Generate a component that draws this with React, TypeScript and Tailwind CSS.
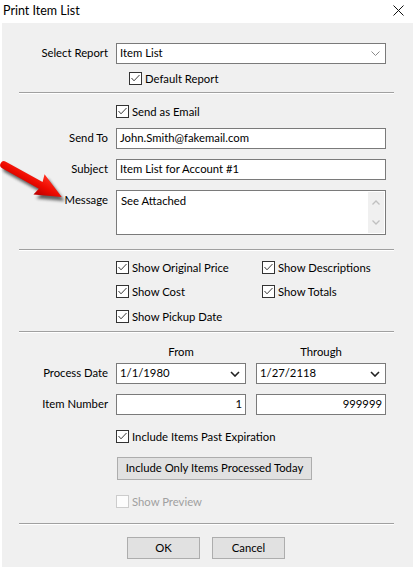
import React from "react";

const FONT = { fontFamily: "Lato, 'Noto Sans', sans-serif" };

function CheckMark() {
  return (
    <svg width="11" height="11" viewBox="0 0 11 11">
      <polyline points="1.5,5 4,7.8 9.5,2" fill="none" stroke="#3a3a3a" strokeWidth="1" />
    </svg>
  );
}

function Check({ label, checked = true, disabled = false }: { label: string; checked?: boolean; disabled?: boolean }) {
  return (
    <div className="flex items-center h-[13px] gap-[3px]">
      <div
        className={
          disabled
            ? "w-[13px] h-[13px] border border-[#cccccc] bg-[#fcfcfc] shrink-0"
            : "w-[13px] h-[13px] border border-[#333333] bg-white shrink-0 flex items-center justify-center"
        }
      >
        {checked && <CheckMark />}
      </div>
      <span className={disabled ? "text-[#a0a0a0] leading-[15px] whitespace-nowrap" : "text-black leading-[15px] whitespace-nowrap"}>{label}</span>
    </div>
  );
}

function Sep({ mt }: { mt: string }) {
  return (
    <div className={`${mt} ml-[17px] w-[375px] flex flex-col`}>
      <div className="h-[1px] bg-[#a0a0a0]" />
      <div className="h-[1px] bg-white" />
    </div>
  );
}

function Label({ children }: { children: React.ReactNode }) {
  return <div className="w-[106px] text-right pr-0 whitespace-nowrap">{children}</div>;
}

function DarkChevron() {
  return (
    <svg width="10" height="6" viewBox="0 0 10 6">
      <polyline points="1,1 5,5 9,1" fill="none" stroke="#222222" strokeWidth="1.6" />
    </svg>
  );
}

const ARROW_PATH = "M 0,-3.8 L 42,-3.8 L 40,-11.5 L 66,0 L 40,11.5 L 42,3.8 L 0,3.8 A 3.8 3.8 0 0 1 0,-3.8 Z";

function Arrow() {
  return (
    <svg className="absolute left-0 top-[150px] pointer-events-none" width="80" height="70" viewBox="0 0 80 70">
      <defs>
        <filter id="blur" x="-30%" y="-30%" width="160%" height="160%">
          <feGaussianBlur stdDeviation="1.8" />
        </filter>
        <linearGradient id="red" gradientUnits="userSpaceOnUse" x1="0" y1="-11" x2="0" y2="11">
          <stop offset="0" stopColor="#ff3020" />
          <stop offset="0.5" stopColor="#ee0a00" />
          <stop offset="1" stopColor="#b80000" />
        </linearGradient>
      </defs>
      <g transform="translate(7,19) rotate(29)" filter="url(#blur)" opacity="0.6">
        <path d={ARROW_PATH} fill="#000" />
      </g>
      <g transform="translate(4,15) rotate(29)">
        <path d={ARROW_PATH} fill="url(#red)" />
      </g>
    </svg>
  );
}

export default function App() {
  return (
    <div className="relative w-[415px] h-[570px] bg-white text-[11.3px] text-black overflow-hidden" style={FONT}>
      {/* Title bar */}
      <div className="h-[23px] flex items-center justify-between pl-[3px] pr-[11px]">
        <span className="text-[12.5px] leading-[16px] pb-[2px]">Print Item List</span>
        <svg width="11" height="11" viewBox="0 0 11 11" className="mb-[3px]">
          <line x1="0.5" y1="0.5" x2="10.5" y2="10.5" stroke="#111" strokeWidth="1" />
          <line x1="10.5" y1="0.5" x2="0.5" y2="10.5" stroke="#111" strokeWidth="1" />
        </svg>
      </div>

      {/* Body */}
      <div className="ml-[2px] w-[411px] h-[544px] bg-[#f0f0f0] flex flex-col">
        {/* Select Report */}
        <div className="mt-[20px] flex items-center gap-[8px]">
          <Label>Select Report</Label>
          <div className="w-[270px] h-[21px] border border-[#7a7a7a] bg-white flex items-center justify-between pl-[3px] pr-[5px]">
            <span>Item List</span>
            <svg width="9" height="5" viewBox="0 0 9 5">
              <polyline points="0.5,0.5 4.5,4.5 8.5,0.5" fill="none" stroke="#8a8a8a" strokeWidth="1" />
            </svg>
          </div>
        </div>
        <div className="mt-[8px] pl-[127px]">
          <Check label="Default Report" />
        </div>

        <Sep mt="mt-[7px]" />

        <div className="mt-[11px] pl-[114px]">
          <Check label="Send as Email" />
        </div>

        <div className="mt-[10px] flex items-center gap-[8px]">
          <Label>Send To</Label>
          <div className="w-[270px] h-[21px] border border-[#7a7a7a] bg-white flex items-center pl-[3px]">
            John.Smith@fakemail.com
          </div>
        </div>

        <div className="mt-[10px] flex items-center gap-[8px]">
          <Label>Subject</Label>
          <div className="w-[270px] h-[21px] border border-[#7a7a7a] bg-white flex items-center pl-[3px]">
            Item List for Account #1
          </div>
        </div>

        <div className="mt-[10px] flex items-start gap-[8px]">
          <div className="w-[106px] text-right pt-[2px]">Message</div>
          <div className="w-[270px] h-[45px] border border-[#7a7a7a] bg-white flex justify-between">
            <span className="pl-[4px] pt-[2px]">See Attached</span>
            <div className="w-[16px] h-[41px] mt-[1px] mr-[1px] bg-[#f0f0f0] flex flex-col items-center justify-between py-[8px]">
              <svg width="8" height="5" viewBox="0 0 8 5">
                <polyline points="0.5,4.5 4,1 7.5,4.5" fill="none" stroke="#c0c0c0" strokeWidth="1.3" />
              </svg>
              <svg width="8" height="5" viewBox="0 0 8 5">
                <polyline points="0.5,0.5 4,4 7.5,0.5" fill="none" stroke="#c0c0c0" strokeWidth="1.3" />
              </svg>
            </div>
          </div>
        </div>

        <Sep mt="mt-[14px]" />

        <div className="mt-[10px] pl-[114px] grid grid-cols-[146px_146px] gap-y-[11px]">
          <Check label="Show Original Price" />
          <Check label="Show Descriptions" />
          <Check label="Show Cost" />
          <Check label="Show Totals" />
        </div>
        <div className="mt-[12px] pl-[114px]">
          <Check label="Show Pickup Date" />
        </div>

        <Sep mt="mt-[8px]" />

        {/* From / Through */}
        <div className="mt-[11px] flex pl-[114px] gap-[10px] h-[16px] leading-[16px]">
          <div className="w-[130px] text-center">From</div>
          <div className="w-[130px] text-center">Through</div>
        </div>

        <div className="mt-[3px] flex items-center gap-[8px]">
          <Label>Process Date</Label>
          <div className="flex gap-[10px]">
            <div className="w-[130px] h-[21px] border border-[#7a7a7a] bg-white flex items-center justify-between pl-[3px] pr-[5px]">
              <span>1/1/1980</span>
              <DarkChevron />
            </div>
            <div className="w-[130px] h-[21px] border border-[#7a7a7a] bg-white flex items-center justify-between pl-[3px] pr-[5px]">
              <span>1/27/2118</span>
              <DarkChevron />
            </div>
          </div>
        </div>

        <div className="mt-[10px] flex items-center gap-[8px]">
          <Label>Item Number</Label>
          <div className="flex gap-[10px]">
            <div className="w-[130px] h-[21px] border border-[#7a7a7a] bg-white flex items-center justify-end pr-[3px]">1</div>
            <div className="w-[130px] h-[21px] border border-[#7a7a7a] bg-white flex items-center justify-end pr-[3px]">999999</div>
          </div>
        </div>

        <div className="mt-[15px] pl-[114px]">
          <Check label="Include Items Past Expiration" />
        </div>

        <div className="mt-[14px] pl-[115px]">
          <button className="w-[195px] h-[23px] border border-[#adadad] bg-[#e1e1e1] flex items-center justify-center">
            Include Only Items Processed Today
          </button>
        </div>

        <div className="mt-[15px] pl-[114px]">
          <Check label="Show Preview" checked={false} disabled />
        </div>

        <Sep mt="mt-[15px]" />

        <div className="mt-[12px] pl-[125px] flex gap-[12px]">
          <button className="w-[73px] h-[22px] border border-[#adadad] bg-[#e1e1e1] flex items-center justify-center">OK</button>
          <button className="w-[73px] h-[22px] border border-[#adadad] bg-[#e1e1e1] flex items-center justify-center">Cancel</button>
        </div>
      </div>

      <Arrow />
    </div>
  );
}
